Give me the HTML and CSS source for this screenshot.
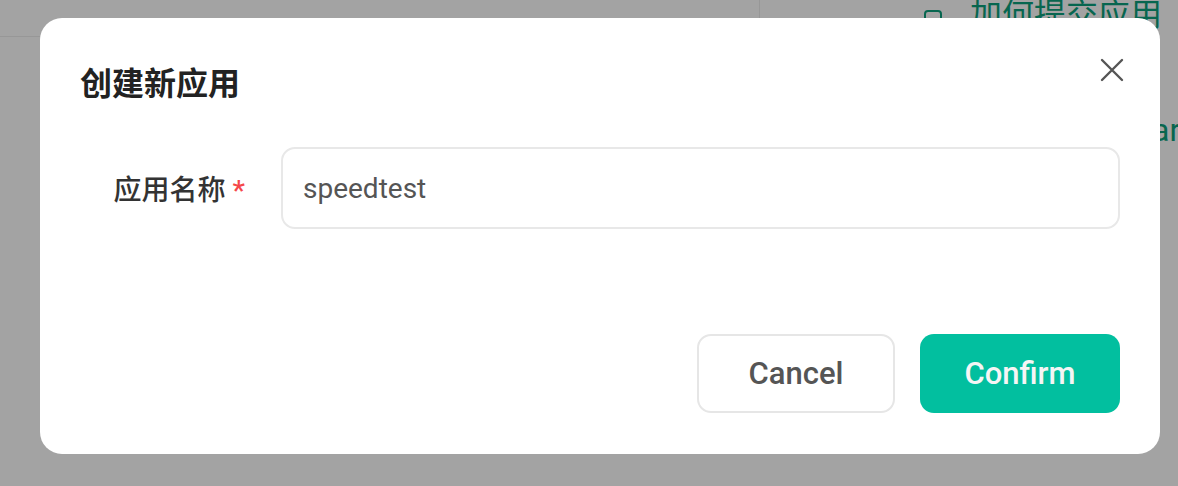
FILE: index.html
```html
<!DOCTYPE html>
<html lang="zh-CN">
<head>
<meta charset="utf-8">
<title>创建新应用</title>
<link rel="stylesheet" href="styles.css">
</head>
<body>
<div class="page">
  <div class="main">
    <div class="main-header"></div>
  </div>
  <aside class="side">
    <a class="side-link"><span class="side-icon"></span>加何提交应用</a>
    <div class="side-text">are</div>
  </aside>
</div>

<div class="modal">
  <div class="modal-header">
    <h2 class="modal-title">创建新应用</h2>
    <button class="close" aria-label="close">
      <svg width="24" height="24" viewBox="0 0 24 24"><path d="M2 2 L22 22 M22 2 L2 22" stroke="#555" stroke-width="2.4" stroke-linecap="round" fill="none"/></svg>
    </button>
  </div>
  <div class="form-row">
    <label class="label">应用名称<span class="req">*</span></label>
    <div class="input">speedtest</div>
  </div>
  <div class="footer">
    <button class="btn btn-cancel">Cancel</button>
    <button class="btn btn-confirm">Confirm</button>
  </div>
</div>
</body>
</html>
```

FILE: styles.css
```css
html, body {
  margin: 0;
  padding: 0;
}
body {
  width: 1178px;
  height: 486px;
  overflow: hidden;
  position: relative;
  background: #a3a3a3;
  font-family: Roboto, "Noto Sans CJK SC", sans-serif;
}
.page {
  display: flex;
  height: 486px;
}
.main {
  flex: none;
  width: 759px;
}
.main-header {
  height: 36px;
  border-bottom: 1px solid #979797;
}
.side {
  flex: 1;
  min-width: 0;
  border-left: 1px solid #979797;
  height: 36px;
  overflow: visible;
}
.side-link {
  display: flex;
  align-items: center;
  margin-top: -8px;
  padding-left: 164px;
  font-family: "Noto Sans CJK SC", sans-serif;
  font-size: 32px;
  line-height: 40px;
  color: #07664f;
  white-space: nowrap;
}
.side-icon {
  flex: none;
  width: 14px;
  height: 14px;
  border: 2px solid #07664f;
  border-radius: 4px;
  margin-right: 28px;
  margin-top: 14px;
}
.side-text {
  margin-top: 78px;
  padding-left: 392px;
  font-size: 32px;
  color: #07664f;
  line-height: 40px;
  white-space: nowrap;
}
.modal {
  position: absolute;
  left: 40px;
  top: 18px;
  width: 1120px;
  height: 436px;
  box-sizing: border-box;
  background: #fff;
  border-radius: 22px;
  padding: 40px 40px 41px 40px;
  display: flex;
  flex-direction: column;
}
.modal-header {
  display: flex;
  justify-content: space-between;
  align-items: center;
  height: 46px;
}
.modal-title {
  margin: 0;
  font-family: "Noto Sans CJK SC", sans-serif;
  font-size: 32px;
  font-weight: 700;
  color: #222;
  line-height: 46px;
}
.close {
  border: none;
  background: none;
  padding: 0;
  margin-right: -4px;
  margin-top: -22px;
  width: 24px;
  height: 24px;
  display: flex;
}
.form-row {
  display: flex;
  align-items: center;
  margin-top: 43px;
}
.label {
  width: 201px;
  box-sizing: border-box;
  padding-right: 36px;
  text-align: right;
  font-family: "Noto Sans CJK SC", sans-serif;
  font-size: 28px;
  font-weight: 500;
  color: #333;
  white-space: nowrap;
}
.req {
  color: #f5474a;
  margin-left: 7px;
  font-family: Roboto, sans-serif;
}
.input {
  flex: 1;
  height: 82px;
  box-sizing: border-box;
  border: 2px solid #e8e8e8;
  border-radius: 14px;
  padding: 0 20px;
  display: flex;
  align-items: center;
  font-size: 28px;
  color: #555;
}
.footer {
  margin-top: auto;
  display: flex;
  justify-content: flex-end;
  gap: 25px;
}
.btn {
  height: 79px;
  border-radius: 14px;
  font-family: Roboto, sans-serif;
  font-size: 31px;
  font-weight: 500;
  box-sizing: border-box;
}
.btn-cancel {
  width: 198px;
  background: #fff;
  border: 2px solid #e6e6e6;
  color: #555;
}
.btn-confirm {
  width: 200px;
  background: #02bf9f;
  border: none;
  color: #f5f5f5;
}
```
